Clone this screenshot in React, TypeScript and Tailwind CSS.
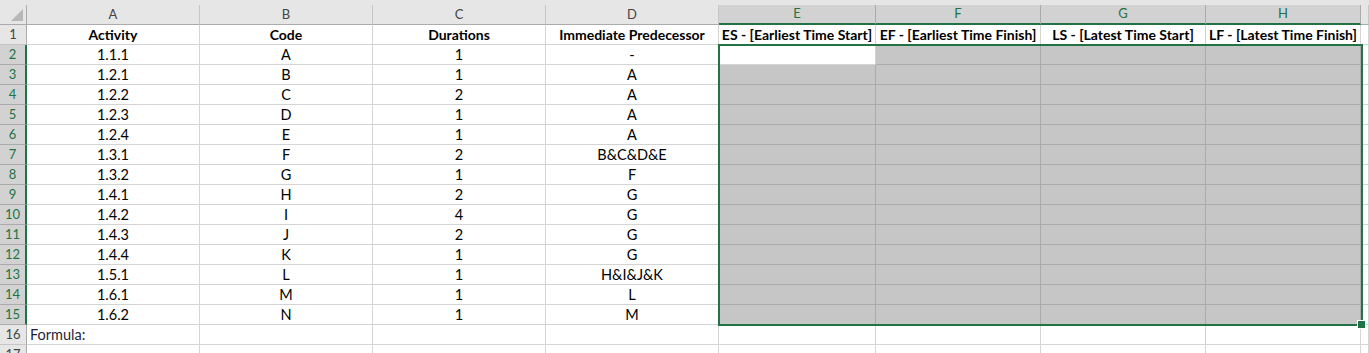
import React from "react";

const rows: string[][] = [
  ["1.1.1", "A", "1", "-"],
  ["1.2.1", "B", "1", "A"],
  ["1.2.2", "C", "2", "A"],
  ["1.2.3", "D", "1", "A"],
  ["1.2.4", "E", "1", "A"],
  ["1.3.1", "F", "2", "B&C&D&E"],
  ["1.3.2", "G", "1", "F"],
  ["1.4.1", "H", "2", "G"],
  ["1.4.2", "I", "4", "G"],
  ["1.4.3", "J", "2", "G"],
  ["1.4.4", "K", "1", "G"],
  ["1.5.1", "L", "1", "H&I&J&K"],
  ["1.6.1", "M", "1", "L"],
  ["1.6.2", "N", "1", "M"],
];

const letters = ["A", "B", "C", "D", "E", "F", "G", "H", ""];
const headers = [
  "Activity",
  "Code",
  "Durations",
  "Immediate Predecessor",
  "ES - [Earliest Time Start]",
  "EF - [Earliest Time Finish]",
  "LS - [Latest Time Start]",
  "LF - [Latest Time Finish]",
  "",
];

const gridCols =
  "grid grid-cols-[27px_173px_173px_173px_173px_157px_165px_165px_155px_1fr]";

// plain sheet cell
const Cell = ({ children, left }: { children?: React.ReactNode; left?: boolean }) => (
  <div
    className={`h-5 border-r border-b border-[#d4d4d4] bg-white flex items-center whitespace-nowrap overflow-visible ${
      left ? "justify-start pl-[3px]" : "justify-center"
    }`}
  >
    {children}
  </div>
);

// selected (E2:H15) cell
const SelCell = ({ active }: { active?: boolean }) => (
  <div
    className={`h-5 border-r border-b ${
      active ? "bg-white border-[#d4d4d4]" : "bg-[#c6c6c6] border-[#ababab]"
    }`}
  />
);

const RowHead = ({ n, sel }: { n: number; sel?: boolean }) => (
  <div
    className={`h-5 border-b flex items-center justify-center text-[13px] ${
      sel
        ? "bg-[#d2d2d2] border-b-[#ababab] border-r-2 border-r-[#217346] text-[#217346]"
        : "bg-[#e6e6e6] border-b-[#c6c6c6] border-r border-r-[#ababab] text-[#444]"
    }`}
  >
    {n}
  </div>
);

export default function App() {
  return (
    <div
      className="relative w-[1369px] h-[353px] overflow-hidden bg-white text-black text-[14.5px]"
      style={{ fontFamily: "Lato, 'Liberation Sans', sans-serif" }}
    >
      <div className="h-[5px] bg-[#e6e6e6]" />

      {/* column letters */}
      <div className={gridCols}>
        <div className="h-5 bg-[#e6e6e6] border-r border-b border-[#ababab] relative">
          <svg className="absolute right-[3px] bottom-[3px]" width="12" height="12" viewBox="0 0 12 12">
            <polygon points="12,0 12,12 0,12" fill="#b8b8b8" />
          </svg>
        </div>
        {letters.map((l, i) => {
          const sel = i >= 4 && i <= 7;
          return (
            <div
              key={i}
              className={`h-5 flex items-center justify-center text-[13px] border-r ${
                sel
                  ? "bg-[#d2d2d2] text-[#217346] border-r-[#ababab] border-b-2 border-b-[#217346]"
                  : "bg-[#e6e6e6] text-[#444] border-r-[#c6c6c6] border-b border-b-[#ababab]"
              }`}
            >
              {l}
            </div>
          );
        })}
      </div>

      {/* row 1 headers */}
      <div className={gridCols}>
        <RowHead n={1} />
        {headers.map((h, i) => (
          <Cell key={i}>
            <span className="font-bold text-[14px]">{h}</span>
          </Cell>
        ))}
      </div>

      {rows.map((r, ri) => (
        <div key={ri} className={gridCols}>
          <RowHead n={ri + 2} sel />
          {r.map((v, ci) => (
            <Cell key={ci}>{v}</Cell>
          ))}
          {[0, 1, 2, 3].map((c) => (
            <SelCell key={c} active={ri === 0 && c === 0} />
          ))}
          <Cell />
        </div>
      ))}

      <div className={gridCols}>
        <RowHead n={16} />
        <Cell left>
          <span className="text-[#1f1f3a]">Formula:</span>
        </Cell>
        {[0, 1, 2, 3, 4, 5, 6, 7].map((c) => (
          <Cell key={c} />
        ))}
      </div>

      <div className={gridCols}>
        <RowHead n={17} />
        {[0, 1, 2, 3, 4, 5, 6, 7, 8].map((c) => (
          <Cell key={c} />
        ))}
      </div>

      {/* selection outline E2:H15 */}
      <div className="absolute left-[718px] top-[44px] w-[645px] h-[282px] border-2 border-[#217346] pointer-events-none" />
      <div className="absolute left-[1358px] top-[321px] w-[7px] h-[7px] bg-[#217346] outline outline-1 outline-white" />
    </div>
  );
}
